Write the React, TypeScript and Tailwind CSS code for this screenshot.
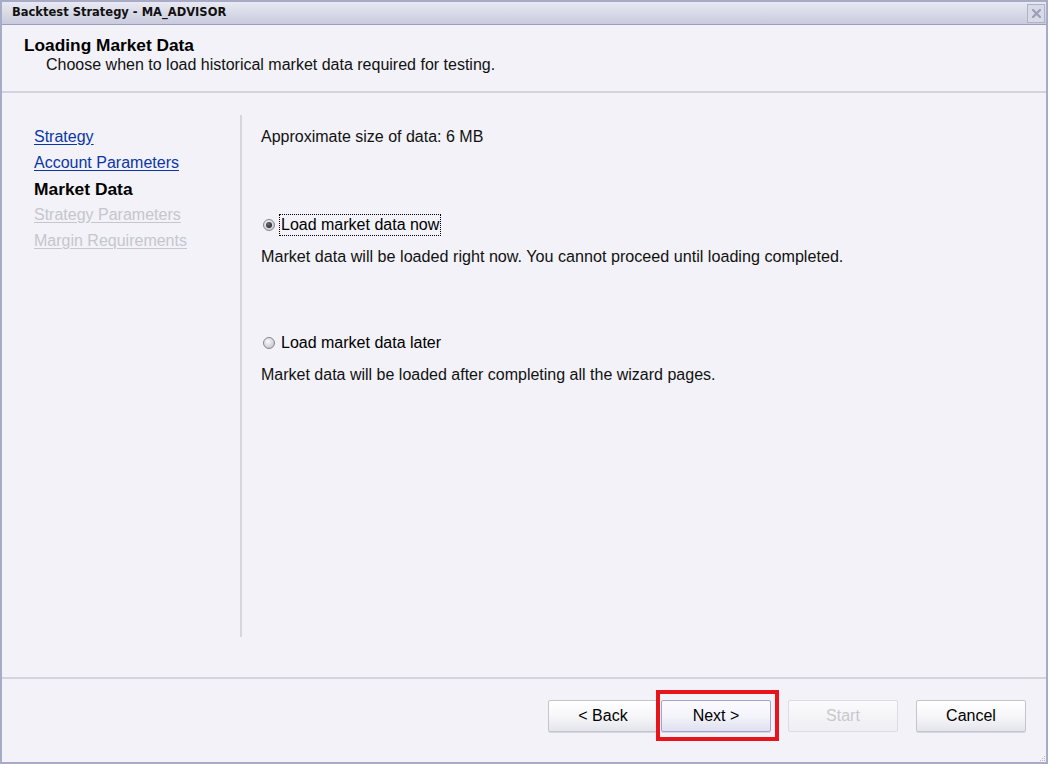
import React from 'react'

const navItems = [
  { label: 'Strategy', state: 'link' },
  { label: 'Account Parameters', state: 'link' },
  { label: 'Market Data', state: 'current' },
  { label: 'Strategy Parameters', state: 'disabled' },
  { label: 'Margin Requirements', state: 'disabled' },
]

function Radio({ checked }: { checked: boolean }) {
  return (
    <span className="relative inline-block w-[12px] h-[12px] rounded-full border border-[#86868e] bg-[radial-gradient(circle_at_40%_35%,#fbfbfb,#b9b9c2)] shrink-0">
      {checked && (
        <span className="absolute left-[2px] top-[2px] w-[6px] h-[6px] rounded-full bg-[radial-gradient(circle_at_40%_35%,#6c6c74,#141418)]" />
      )}
    </span>
  )
}

function WizButton({ label, disabled, focused }: { label: string; disabled?: boolean; focused?: boolean }) {
  return (
    <button
      className={`w-[110px] h-[32px] rounded-[2px] border text-[16px] bg-gradient-to-b shadow-[0_1px_0_#d8d8e0] ${
        disabled
          ? 'text-[#c8c8cc] border-[#dcdce2] from-[#fbfbfd] to-[#eeeef3] shadow-none'
          : focused
          ? 'text-black border-[#a2a4d0] from-[#fafaff] via-[#f4f4fb] to-[#e0e0f0]'
          : 'text-black border-[#c4c4ce] from-[#ffffff] via-[#f7f7fa] to-[#e4e4ec]'
      }`}
    >
      {label}
    </button>
  )
}

export default function App() {
  return (
    <div className="w-[1048px] h-[764px] flex flex-col bg-[#f2f2f8] border-2 border-[#a8abc6] font-['Liberation_Sans',Arial,sans-serif] text-black overflow-hidden">
      {/* title bar */}
      <div className="h-[23px] shrink-0 flex items-center justify-between pl-[10px] pr-[1px] bg-gradient-to-b from-[#e8e9f2] to-[#c9cbdd] border-b border-[#9a9dbb]">
        <span className="font-['DejaVu_Sans',sans-serif] font-bold text-[11.5px] text-[#111]">Backtest Strategy - MA_ADVISOR</span>
        <span className="w-[18px] h-[19px] flex items-center justify-center border border-[#aeb1ca] bg-[#d8dae8]">
          <svg width="9" height="9" viewBox="0 0 9 9">
            <path d="M1 1 L8 8 M8 1 L1 8" stroke="#9c9eb8" strokeWidth="2.2" strokeLinecap="square" />
          </svg>
        </span>
      </div>

      {/* header */}
      <div className="h-[68px] shrink-0 border-b-2 border-[#d4d4de] pl-[22px] pt-[10px]">
        <div className="text-[17.3px] font-bold leading-[21px]">Loading Market Data</div>
        <div className="pl-[22px] text-[16px] leading-[18px] text-[#111]">Choose when to load historical market data required for testing.</div>
      </div>

      {/* body */}
      <div className="flex-1 flex pt-[22px] pb-[40px]">
        <nav className="w-[240px] shrink-0 border-r-2 border-[#d6d6de] pl-[32px] pt-[9px]">
          {navItems.map((item) => (
            <div
              key={item.label}
              className={`h-[26px] leading-[26px] ${
                item.state === 'link'
                  ? 'text-[16px] text-[#0b36a8] underline underline-offset-2'
                  : item.state === 'current'
                  ? 'text-[17.4px] font-bold text-black'
                  : 'text-[16px] text-[#c6c6cc] underline underline-offset-2'
              }`}
            >
              {item.label}
            </div>
          ))}
        </nav>

        <div className="flex-1 pl-[19px] pt-[9px] text-[16px] text-[#111]">
          <p className="h-[26px] leading-[26px]">Approximate size of data: 6 MB</p>

          <label className="mt-[63px] h-[24px] flex items-center">
            <span className="ml-[2px] flex"><Radio checked /></span>
            <span className="ml-[4px] px-[1px] h-[22px] leading-[20px] border border-dotted border-black text-[16px] text-black">
              Load market data now
            </span>
          </label>
          <p className="mt-[9px] h-[20px] leading-[20px] text-[16.15px]">
            Market data will be loaded right now. You cannot proceed until loading completed.
          </p>

          <label className="mt-[65px] h-[24px] flex items-center">
            <span className="ml-[2px] flex"><Radio checked={false} /></span>
            <span className="ml-[5px] px-[1px] text-[16px] text-black">Load market data later</span>
          </label>
          <p className="mt-[10px] h-[20px] leading-[20px]">
            Market data will be loaded after completing all the wizard pages.
          </p>
        </div>
      </div>

      {/* footer */}
      <div className="h-[85px] shrink-0 border-t-2 border-[#d4d4de] relative flex justify-end items-start pt-[21px] pr-[20px]">
        <div className="flex">
          <WizButton label="< Back" />
          <div className="relative ml-[3px]">
            <WizButton label="Next >" focused />
            <div className="absolute -left-[5px] -top-[10px] w-[123px] h-[51px] border-[4px] border-[#e8141c] pointer-events-none" />
          </div>
          <div className="ml-[17px]">
            <WizButton label="Start" disabled />
          </div>
          <div className="ml-[18px]">
            <WizButton label="Cancel" />
          </div>
        </div>
        <div className="absolute right-[1px] bottom-[1px] grid grid-cols-3 gap-[1px]">
          <span />
          <span />
          <span className="w-[1px] h-[1px] bg-[#b8b8c4]" />
          <span />
          <span className="w-[1px] h-[1px] bg-[#b8b8c4]" />
          <span className="w-[1px] h-[1px] bg-[#b8b8c4]" />
          <span className="w-[1px] h-[1px] bg-[#b8b8c4]" />
          <span className="w-[1px] h-[1px] bg-[#b8b8c4]" />
          <span className="w-[1px] h-[1px] bg-[#b8b8c4]" />
        </div>
      </div>
    </div>
  )
}
